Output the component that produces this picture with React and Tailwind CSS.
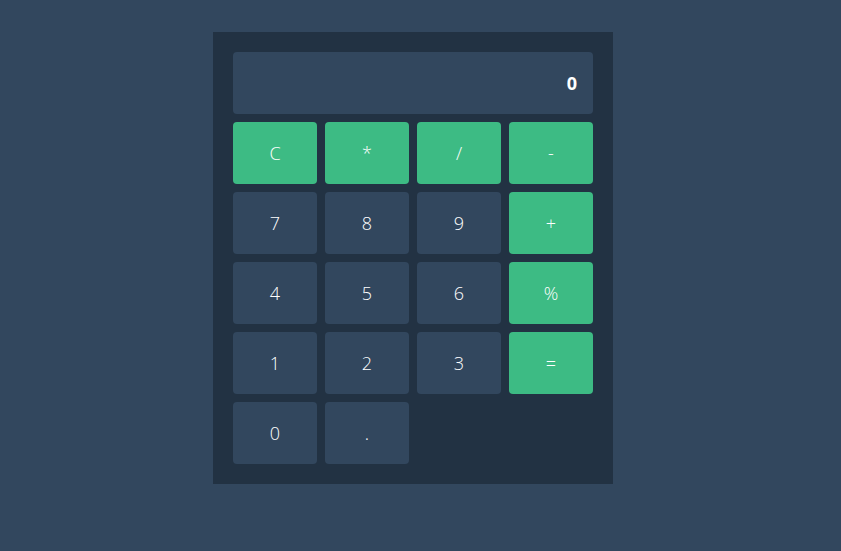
import React, { useState } from 'react';

const keys = [
  { label: 'C', op: true },
  { label: '*', op: true },
  { label: '/', op: true },
  { label: '-', op: true },
  { label: '7' },
  { label: '8' },
  { label: '9' },
  { label: '+', op: true },
  { label: '4' },
  { label: '5' },
  { label: '6' },
  { label: '%', op: true },
  { label: '1' },
  { label: '2' },
  { label: '3' },
  { label: '=', op: true },
  { label: '0' },
  { label: '.' },
];

const App = () => {
  const [display, setDisplay] = useState('0');

  const handleClick = (k) => {
    if (k === 'C') return setDisplay('0');
    if (k === '=') {
      try {
        // eslint-disable-next-line no-new-func
        setDisplay(String(Function('return (' + display + ')')()));
      } catch (e) {
        setDisplay('Error');
      }
      return;
    }
    setDisplay(prev => (prev === '0' && k !== '.' ? k : prev + k));
  };

  return (
    <div
      className="w-full min-h-screen h-[551px] bg-[#32475e] flex justify-center items-start pt-8 pr-[15px]"
      style={{ fontFamily: '"Open Sans", "Noto Sans", sans-serif' }}
    >
      <div className="w-[400px] bg-[#223243] p-5">
        {/* Pantalla */}
        <div className="h-[62px] bg-[#32475e] rounded flex items-center justify-end px-4 text-white text-lg font-bold">
          {display}
        </div>

        {/* Teclado */}
        <div className="mt-2 grid grid-cols-4 gap-2">
          {keys.map((k) => (
            <button
              key={k.label}
              onClick={() => handleClick(k.label)}
              className={`h-[62px] rounded text-white text-lg font-light ${
                k.op ? 'bg-[#3dbb84]' : 'bg-[#32475e]'
              }`}
            >
              {k.label}
            </button>
          ))}
        </div>
      </div>
    </div>
  );
};

export default App;
